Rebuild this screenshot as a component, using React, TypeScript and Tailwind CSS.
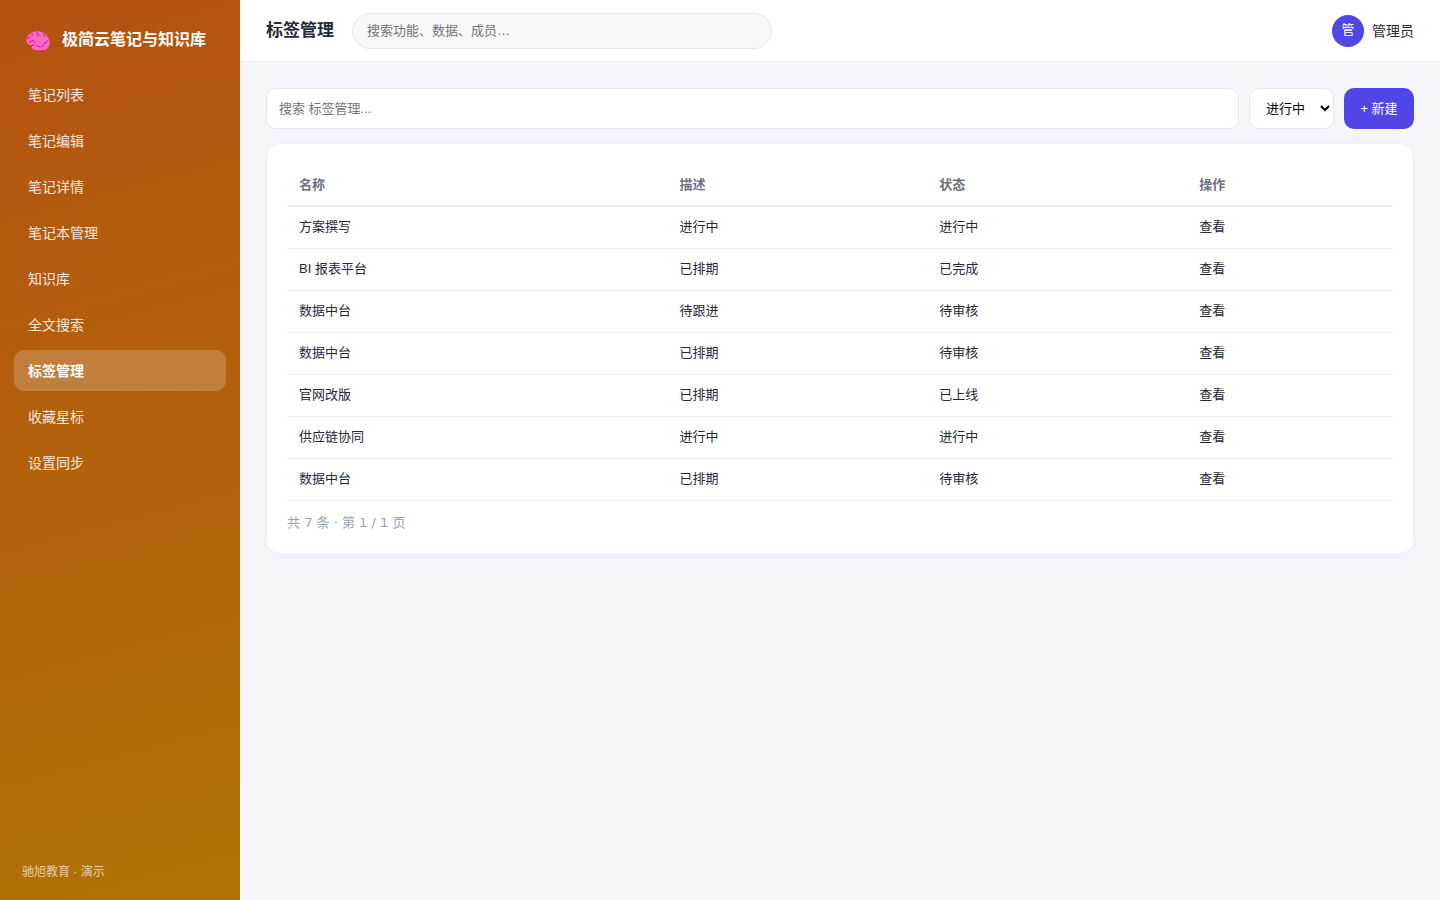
import { useState } from 'react';

const navItems = [
  '笔记列表',
  '笔记编辑',
  '笔记详情',
  '笔记本管理',
  '知识库',
  '全文搜索',
  '标签管理',
  '收藏星标',
  '设置同步',
];

const rows = [
  { name: '方案撰写', desc: '进行中', status: '进行中' },
  { name: 'BI 报表平台', desc: '已排期', status: '已完成' },
  { name: '数据中台', desc: '待跟进', status: '待审核' },
  { name: '数据中台', desc: '已排期', status: '待审核' },
  { name: '官网改版', desc: '已排期', status: '已上线' },
  { name: '供应链协同', desc: '进行中', status: '进行中' },
  { name: '数据中台', desc: '已排期', status: '待审核' },
];

function BrainIcon() {
  return (
    <svg viewBox="0 -4 24 26" className="h-[26px] w-6 shrink-0" aria-hidden="true">
      <path d="M13.500 18h4.800l-.6 4h-1.400z" fill="#f0148c" />
      <path
        d="M.3 10C.1 6.900 1.900 4 4.700 2.500 6.700.8 9.300 0 11.500.2c2.300-.2 4.600.6 6 2 2.200.6 3.700 2.300 4.100 4.300 1.500 1.500 2.100 3.600 1.900 5.600.1 2.800-1 4.800-2.700 6-1.600 1.200-3.200 1.200-4.600 1-3 .4-7.700.2-9.200-.8-1.400-.8-1.600-2.600-1.400-4-3-.2-5.100-1.700-5.300-4.300z"
        fill="#ff6ac2"
      />
      <path
        d="M1.500 8 3.600 6M5.600 4.300l1.600-1M11.400 1v1.800M3.600 11.500l1.700-1.500 2-.6M8 10.800l1 .8M11 3.800l2.400 1M17.500 3.600l1.800 2M21.400 9.500l-1.600 2.300-2.400 1.400M10.400 14.800l2.400 1h3.200l1.400-1.300M5.600 14.600l2.600-.8"
        fill="none"
        stroke="#f0189a"
        strokeWidth="1.1"
        strokeLinecap="round"
      />
    </svg>
  );
}

function Sidebar() {
  return (
    <aside className="flex w-60 shrink-0 flex-col bg-[linear-gradient(165deg,#b45210,#b07207)] px-[14px] pt-5 pb-[18px] text-white">
      <div className="flex h-10 items-center gap-3 px-3 text-base font-bold">
        <BrainIcon />
        <span className="whitespace-nowrap">极简云笔记与知识库</span>
      </div>
      <nav className="mt-[14px] flex flex-col gap-[5px] text-sm">
        {navItems.map((item) => (
          <a
            key={item}
            href="#"
            className={
              item === '标签管理'
                ? 'flex h-[41px] items-center rounded-[10px] bg-white/20 px-[14px] font-bold'
                : 'flex h-[41px] items-center rounded-[10px] px-[14px] text-white/85 hover:bg-white/10'
            }
          >
            {item}
          </a>
        ))}
      </nav>
      <p className="mt-auto px-2 text-xs leading-5 text-white/65">驰旭教育 · 演示</p>
    </aside>
  );
}

function Topbar() {
  return (
    <header className="flex h-[62px] items-center gap-[18px] border-b border-[#ecedf3] bg-white px-[26px]">
      <h1 className="text-[17px] font-bold">标签管理</h1>
      <input
        type="search"
        aria-label="全局搜索"
        placeholder="搜索功能、数据、成员…"
        className="h-9 w-full max-w-[420px] rounded-full border border-[#e5e7f0] bg-[#f6f7fb] px-[14px] text-[13px] outline-none placeholder:text-[#757575]"
      />
      <div className="ml-auto flex shrink-0 items-center gap-2 text-sm">
        <span className="flex size-8 items-center justify-center rounded-full bg-[#4f46e5] text-[13px] text-white">
          管
        </span>
        管理员
      </div>
    </header>
  );
}

function TagTable() {
  return (
    <section className="rounded-[14px] border border-[#f0f1f6] bg-white p-5 shadow-[0_2px_6px_rgba(30,41,90,0.04)]">
      <table className="w-full table-fixed text-left text-[13px] leading-5">
        <thead>
          <tr className="h-[42px] border-b-2 border-[#eeeff5] text-[#6b7280]">
            <th className="w-[34.4%] px-3 font-bold">名称</th>
            <th className="w-[23.5%] px-3 font-bold">描述</th>
            <th className="w-[23.5%] px-3 font-bold">状态</th>
            <th className="px-3 font-bold">操作</th>
          </tr>
        </thead>
        <tbody>
          {rows.map((row, i) => (
            <tr key={i} className="h-[42px] border-b border-[#eeeff4]">
              <td className="px-3">{row.name}</td>
              <td className="px-3">{row.desc}</td>
              <td className="px-3">{row.status}</td>
              <td className="px-3">
                <a href="#">查看</a>
              </td>
            </tr>
          ))}
        </tbody>
      </table>
      <p className="mt-3 font-['DejaVu_Sans','Noto_Sans_CJK_SC',sans-serif] text-[13px] leading-5 text-[#94a3b8]">
        共 7 条 · 第 1 / 1 页
      </p>
    </section>
  );
}

export default function App() {
  const [status, setStatus] = useState('进行中');

  return (
    <div className="flex min-h-screen bg-[#f5f6fb] font-['Liberation_Sans','Noto_Sans_CJK_SC',sans-serif] text-[#1f2937]">
      <Sidebar />
      <div className="min-w-0 flex-1">
        <Topbar />
        <main className="px-[26px] py-[26px]">
          <div className="mb-[14px] flex h-[41px] gap-[10px] text-[13px]">
            <input
              type="search"
              aria-label="搜索标签"
              placeholder="搜索 标签管理..."
              className="min-w-0 flex-1 rounded-[10px] border border-[#e5e7f0] bg-white px-3 outline-none placeholder:text-[#757575]"
            />
            <select
              aria-label="状态"
              value={status}
              onChange={(e) => setStatus(e.target.value)}
              className="w-[85px] rounded-[10px] border border-[#e5e7f0] bg-white pl-3 text-black"
            >
              <option>进行中</option>
              <option>已完成</option>
              <option>待审核</option>
              <option>已上线</option>
            </select>
            <button type="button" className="w-[70px] rounded-[10px] bg-[#4f46e5] text-white">
              + 新建
            </button>
          </div>
          <TagTable />
        </main>
      </div>
    </div>
  );
}
